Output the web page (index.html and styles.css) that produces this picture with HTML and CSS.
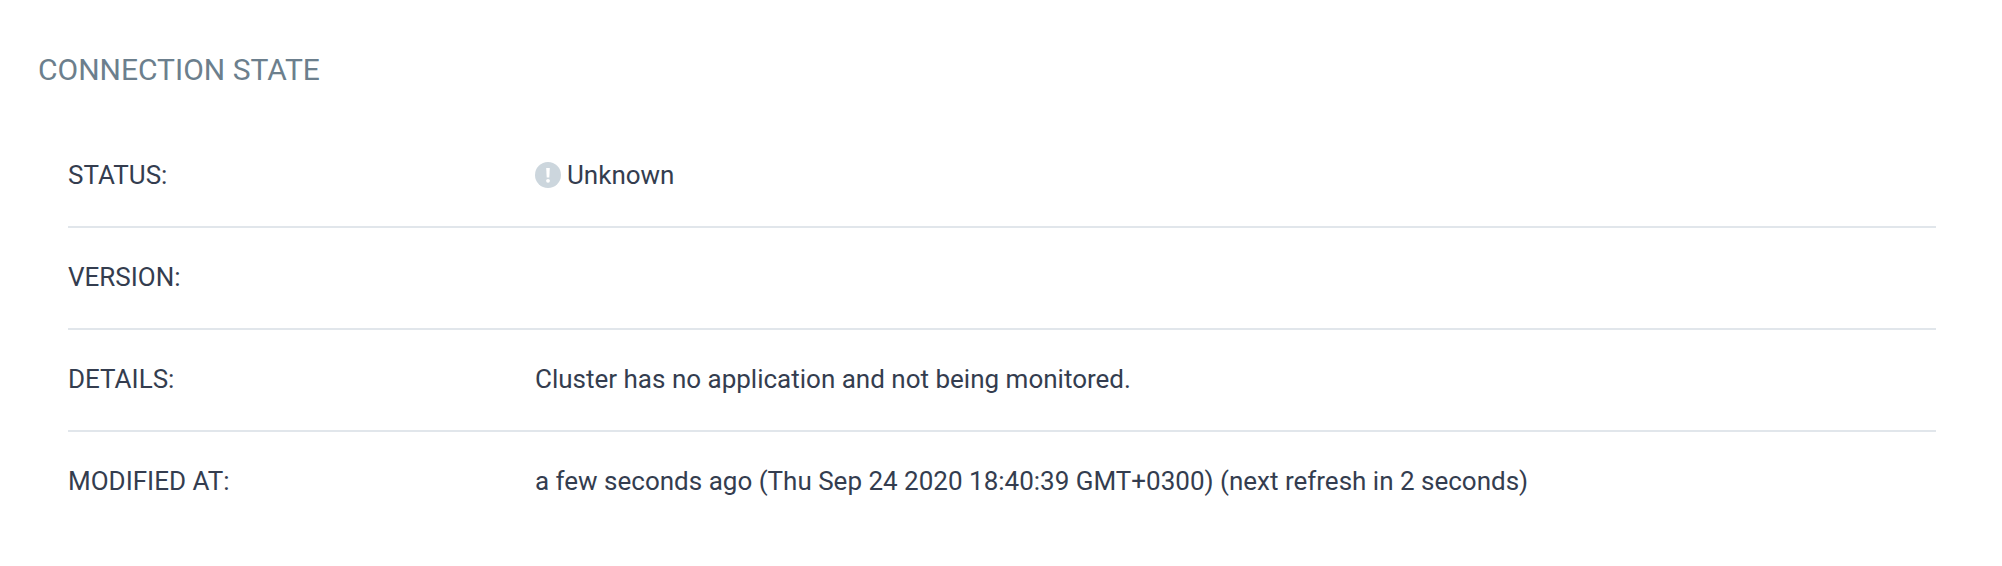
FILE: index.html
```html
<!DOCTYPE html>
<html lang="en">
  <head>
    <meta charset="UTF-8" />
    <title>Connection state</title>
    <link rel="stylesheet" href="styles.css">
  </head>
  <body>
    <section class="panel">
      <h2 class="panel-title">CONNECTION STATE</h2>
      <div class="rows">
        <div class="row">
          <div class="row-label">STATUS:</div>
          <div class="row-value">
            <svg class="status-icon" viewBox="0 0 26 26">
              <circle cx="13" cy="13" r="13" fill="#ccd6dd" />
              <path d="M11.2 6h3.6l-.5 9.5h-2.6z" fill="#fff" />
              <circle cx="13" cy="18.8" r="1.9" fill="#fff" />
            </svg>
            <span>Unknown</span>
          </div>
        </div>
        <div class="row">
          <div class="row-label">VERSION:</div>
          <div class="row-value"></div>
        </div>
        <div class="row">
          <div class="row-label">DETAILS:</div>
          <div class="row-value">Cluster has no application and not being monitored.</div>
        </div>
        <div class="row">
          <div class="row-label">MODIFIED AT:</div>
          <div class="row-value">a few seconds ago (Thu Sep 24 2020 18:40:39 GMT+0300) (next refresh in 2 seconds)</div>
        </div>
      </div>
    </section>
  </body>
</html>
```

FILE: styles.css
```css
body {
  margin: 0;
  background: #fff;
  font-family: Roboto, sans-serif;
  color: #343d4f;
}
.panel {
  padding: 52px 66px 0 38px;
}
.panel-title {
  margin: 0 0 38px;
  font-size: 30px;
  line-height: 36px;
  font-weight: 400;
  color: #6c7f8d;
}
.rows {
  margin-left: 30px;
}
.row {
  box-sizing: border-box;
  display: flex;
  align-items: center;
  height: 102px;
  padding-bottom: 2px;
  font-size: 26px;
  border-bottom: 2px solid #e1e6eb;
}
.row:last-child {
  border-bottom-color: transparent;
}
.row-label {
  width: 467px;
}
.row-value {
  display: flex;
  align-items: center;
}
.status-icon {
  width: 26px;
  height: 26px;
  margin-right: 6px;
}
```
